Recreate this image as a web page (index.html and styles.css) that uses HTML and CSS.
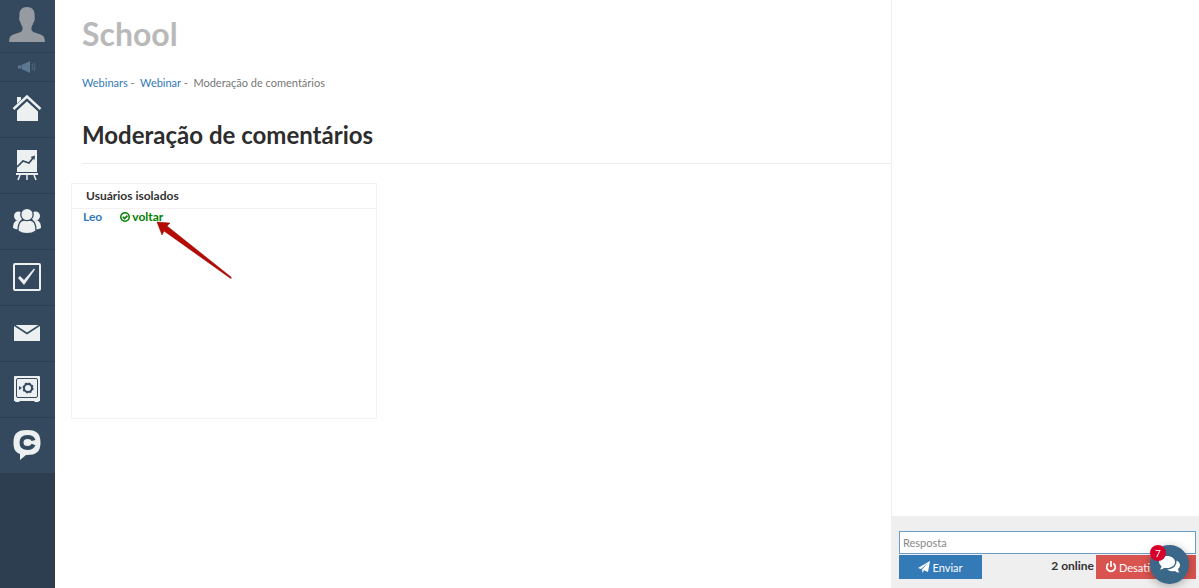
FILE: index.html
```html
<!DOCTYPE html>
<html lang="pt">
<head>
    <meta charset="UTF-8">
    <meta name="viewport" content="width=device-width, initial-scale=1.0">
    <title>Moderação de comentários</title>
    <link rel="stylesheet" href="styles.css">
</head>
<body>
    <!-- Left menu -->
    <nav class="sidebar">
        <a href="#" class="menu-profile" aria-label="Perfil">
            <svg width="38" height="37" viewBox="0 0 38 37"><path fill="#959ba1" d="M19 1c-5 0-8 3-7.600 9 0 2-.6 2 0 4 .4 2 1.200 2 1.600 4l1.500 3v3c-1 2-3 2.500-6 3.500-5 1.500-6.500 2.500-7 5L1 36h36l-.5-3.500c-.5-2.500-2-3.500-7-5-3-1-5-1.500-6-3.500v-3l1.500-3c.4-2 1.200-2 1.600-4 .6-2 0-2 0-4C27 4 24 1 19 1z"/></svg>
        </a>
        <a href="#" class="menu-notify" aria-label="Notificações">
            <svg width="18" height="12" viewBox="0 0 18 12"><path fill="#5d7790" d="M0 4.500h3v3H0zM3.500 4l8.500-4v12L3.500 8z"/><path fill="none" stroke="#50697f" d="M14 3q1.500 3 0 6M16 2q2 4 0 8"/></svg>
        </a>
        <a href="#" class="menu-item" aria-label="Início">
            <svg width="30" height="30" viewBox="0 0 30 30"><path fill="#ecf0f1" d="M5 3h4v3L5 10zM15 6L26 16v11H5V16z"/><path fill="none" stroke="#34495e" stroke-width="5" d="M2 16L15 4l13 12"/><path fill="none" stroke="#ecf0f1" stroke-width="2.400" d="M1.500 15L15 2.500 28.500 15"/></svg>
        </a>
        <a href="#" class="menu-item" aria-label="Treinamentos">
            <svg width="30" height="32" viewBox="0 0 30 32"><path fill="#ecf0f1" d="M5 1h20v22H5zM4 24h22v2H4z"/><path fill="none" stroke="#ecf0f1" stroke-width="1.500" d="M8 26l-2 5M15 26v5M22 26l2 5"/><path fill="none" stroke="#34495e" stroke-width="1.700" d="M5 18l6-6 6 2 4-5"/><path fill="#34495e" d="M18.500 8L23 6.500 22.500 11z"/></svg>
        </a>
        <a href="#" class="menu-item" aria-label="Usuários">
            <svg width="30" height="28" viewBox="0 0 30 28"><g fill="#ecf0f1"><circle cx="6.500" cy="9" r="4.500"/><circle cx="23.500" cy="9" r="4.500"/><path d="M1 21c0-5 2-8 6-8h16c4 0 6 3 6 8-2 1-4 1.500-6 1.500H7C5 22.500 3 22 1 21z"/></g><g fill="#ecf0f1" stroke="#34495e" stroke-width="1.300"><path d="M6 24c0-7 2-11 6-11h6c4 0 6 4 6 11-5 3.500-13 3.500-18 0z"/><circle cx="15" cy="7.500" r="6.200"/></g></svg>
        </a>
        <a href="#" class="menu-item" aria-label="Tarefas">
            <svg width="30" height="30" viewBox="0 0 30 30"><rect x="2" y="2" width="26" height="26" rx="1" fill="none" stroke="#ecf0f1" stroke-width="2"/><path fill="#ecf0f1" d="M6 16l2-2 4 4L22 6.500l1 1L12 23z"/></svg>
        </a>
        <a href="#" class="menu-item" aria-label="Mensagens">
            <svg width="30" height="20" viewBox="0 0 30 20"><path fill="#ecf0f1" d="M2 3l13 8.500L28 3v15H2zM3.500 2h23L15 9.500z"/></svg>
        </a>
        <a href="#" class="menu-item" aria-label="Vendas">
            <svg width="30" height="30" viewBox="0 0 30 30"><path fill="#ecf0f1" d="M3 2h24q1 0 1 1v24h-1q0 1-1 1h-3l-1-1H8l-1 1H4q-1 0-1-1H2V3q0-1 1-1z"/><rect x="4.500" y="4.500" width="21" height="19" rx="1.500" fill="none" stroke="#34495e"/><circle cx="16" cy="14" r="4" fill="none" stroke="#34495e" stroke-width="2"/><circle cx="16" cy="14" r="5" fill="none" stroke="#34495e" stroke-width="1.200" stroke-dasharray="2 1.930"/><path fill="#34495e" d="M7 12l3 2-3 2z"/></svg>
        </a>
        <a href="#" class="menu-item" aria-label="Chat">
            <svg width="30" height="32" viewBox="0 0 30 32"><path fill="#ecf0f1" d="M15 1c9 0 13.500 3 13.500 12.500S24 26 15 26h-1l-6 5v-6C3 23 1.500 20 1.500 13.500 1.500 4 6 1 15 1z"/><path fill="none" stroke="#34495e" stroke-width="4" d="M21.500 11.500c-.8-2.800-3-3.500-6-3.500-4 0-6 1.500-6 5.500s2 5.500 6 5.500c3 0 5-.7 6-3.500"/></svg>
        </a>
    </nav>

    <main class="content">
        <header class="page-header">
            <div class="school-name">School</div>
            <div class="breadcrumb">
                <a href="#">Webinars</a> -&nbsp; <a href="#">Webinar</a> -&nbsp; <span>Moderação de comentários</span>
            </div>
            <h1>Moderação de comentários</h1>
        </header>

        <!-- Isolated users -->
        <section class="isolated">
            <h2>Usuários isolados</h2>
            <div class="isolated-user">
                <a href="#">Leo</a>
                <a href="#" class="return-link">
                    <svg width="10" height="10" viewBox="0 0 10 10" fill="none" stroke="currentColor" stroke-width="1.500"><circle cx="5" cy="5" r="4.200"/><path d="M2.700 4.800l1.800 1.800 3-3"/></svg>
                    voltar
                </a>
            </div>
            <svg class="arrow" width="78" height="60" viewBox="0 0 78 60"><path fill="#b50b04" stroke="#8c0b06" stroke-width=".5" d="M1 1l13 1-3 3 64 51q1 2-1 1L8 10l-2 4z"/></svg>
        </section>
    </main>

    <!-- Comments column -->
    <aside class="comments">
        <form class="reply">
            <input type="text" placeholder="Resposta" aria-label="Resposta">
            <div class="reply-bar">
                <button type="button" class="btn-send">
                    <svg width="12" height="12" viewBox="0 0 12 12" fill="#fff"><path d="M12 0l-2 11-4-1.700L4.500 12 4 8.500 10 2 3 8 0 7z"/></svg>
                    Enviar
                </button>
                <span class="online">2 online</span>
                <button type="button" class="btn-disable">
                    <svg width="12" height="12" viewBox="0 0 12 12" fill="none" stroke="#fff" stroke-width="1.700"><path d="M3.500 2.500a4.300 4.300 0 1 0 5 0M6 0v6"/></svg>
                    Desativar
                </button>
            </div>
        </form>
    </aside>

    <button type="button" class="chat-button" aria-label="Abrir chat">
        <svg width="22" height="18" viewBox="0 0 22 18" fill="#fff"><path d="M8 0c4.500 0 8 2.500 8 6s-3.500 6-8 6q-1.500 0-2.500-.3Q3.500 13.500 1 13.500 2.300 12 2.500 10.200 0 8.500 0 6c0-3.500 3.500-6 8-6z"/><path d="M17.500 4.500C20 5.500 21 7.500 21 9.300q0 2-2 3.700 0 2 1.500 3.500-3 0-4.500-1.500-5 1-8-1.500c6 0 10-4 9.500-9z"/></svg>
        <span class="badge">7</span>
    </button>
</body>
</html>
```
FILE: styles.css
```css
* {
    box-sizing: border-box;
}
body {
    margin: 0;
    min-height: 100vh;
    display: flex;
    font-family: Lato, "Open Sans", sans-serif;
    font-size: 11px;
    line-height: 16px;
    color: #333;
    background-color: #fff;
}
a {
    color: #337ab7;
    text-decoration: none;
}
button {
    border: none;
    font-family: inherit;
    cursor: pointer;
}

/* menu */
.sidebar {
    flex: 0 0 55px;
    background-color: #2c3e50;
}
.sidebar a {
    display: flex;
    align-items: center;
    justify-content: center;
    padding: 0 1px 1px 0;
    background-color: #34495e;
    border-bottom: 1px solid #2c3e50;
}
.sidebar .menu-profile {
    height: 53px;
    padding-bottom: 4px;
}
.menu-notify {
    height: 29px;
}
.menu-item {
    height: 56px;
}

/* content */
.content {
    flex: 1;
    padding: 16px 0 0 16px;
}
.page-header {
    margin-left: 11px;
    border-bottom: 1px solid #eee;
}
.school-name {
    font-size: 32px;
    line-height: 36px;
    font-weight: bold;
    color: #b9b9b9;
}
.breadcrumb {
    margin-top: 23px;
    color: #777;
}
h1 {
    margin: 0;
    padding: 28px 0 12px;
    font-size: 24px;
    line-height: 32px;
    color: #2d2d2d;
}
.isolated {
    position: relative;
    width: 306px;
    height: 236px;
    margin-top: 19px;
    border: 1px solid #f2f2f2;
}
h2 {
    margin: 0;
    padding: 4px 14px;
    font-size: 12px;
    line-height: 16px;
    border-bottom: 1px solid #f2f2f2;
}
.isolated-user {
    display: flex;
    gap: 18px;
    padding: 0 11px;
    font-size: 12px;
    font-weight: bold;
}
.isolated-user .return-link {
    display: flex;
    align-items: center;
    gap: 2px;
    color: #008000;
}
.arrow {
    position: absolute;
    left: 84px;
    top: 37px;
}

/* comments */
.comments {
    flex: 0 0 308px;
    display: flex;
    flex-direction: column;
    justify-content: flex-end;
    border-left: 1px solid #eee;
}
.reply {
    padding: 15px 3px 9px 7px;
    background-color: #efefef;
}
.reply input {
    display: block;
    width: 100%;
    height: 23px;
    padding: 0 3px 1px;
    border: 1px solid #6b9dc4;
    font-family: inherit;
    font-size: 11px;
}
.reply input::placeholder {
    color: #888;
}
.reply-bar {
    display: flex;
    margin-top: 1px;
}
.reply-bar button {
    display: flex;
    align-items: center;
    gap: 2px;
    height: 24px;
    color: #fff;
    font-size: 11px;
}
.btn-send {
    width: 83px;
    justify-content: center;
    background-color: #337ab7;
}
.online {
    margin-left: auto;
    padding: 3px 2px 0;
    font-size: 12px;
    font-weight: bold;
}
.reply-bar .btn-disable {
    width: 100px;
    padding: 0 9px;
    background-color: #d9534f;
}
.chat-button {
    position: fixed;
    right: 10px;
    bottom: 4px;
    width: 39px;
    height: 39px;
    padding: 0;
    display: flex;
    align-items: center;
    justify-content: center;
    border-radius: 50%;
    background-color: #3b6788;
    box-shadow: 0 2px 10px rgba(0,0,0,0.3);
}
.badge {
    position: absolute;
    left: 0;
    top: 0;
    width: 16px;
    height: 16px;
    border-radius: 50%;
    background-color: #d6002a;
    color: #fff;
    font-size: 10px;
    line-height: 16px;
    text-align: center;
}
```
